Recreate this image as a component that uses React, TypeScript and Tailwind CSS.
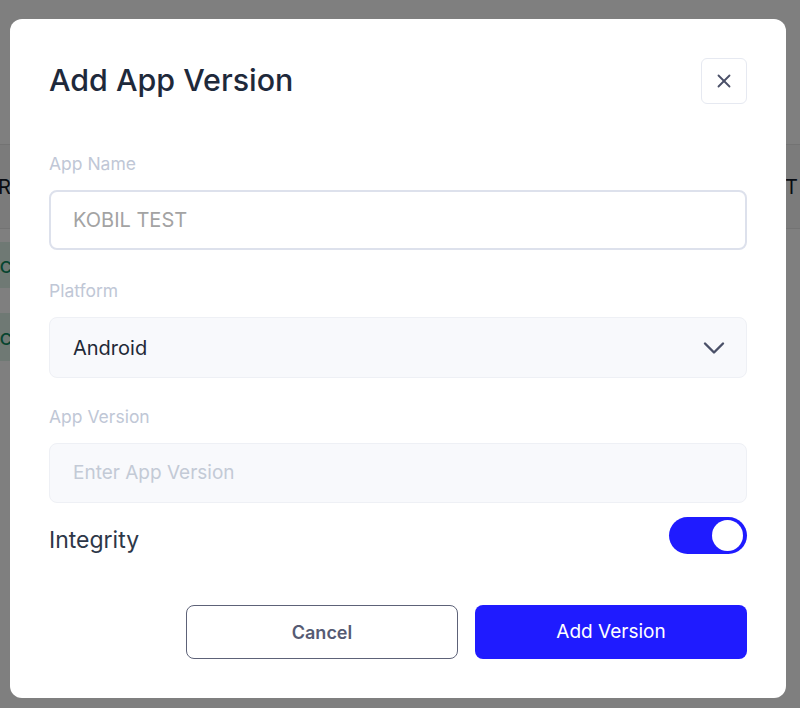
import { X, ChevronDown } from 'lucide-react';

export default function App() {
    return (
        <div className="relative w-[800px] h-[708px] overflow-hidden bg-white font-['Inter',sans-serif]">

            {/* Page behind the dialog */}
            <div className="pt-[144px]">
                <div className="h-[85px] bg-[#f6f6f6] border-y border-[#e6e6e6] flex items-center justify-between text-[20px] text-[#111827]">
                    <span className="-ml-[2px]">RI</span>
                    <span className="mr-[2px]">T</span>
                </div>
                <div className="h-[72px] flex items-center">
                    <span className="h-[46px] w-[60px] -ml-[40px] bg-[#def3e8] text-[#0f8a5f] text-[22px] flex items-center justify-end pr-[8px]">ic</span>
                </div>
                <div className="h-[72px] flex items-center">
                    <span className="h-[48px] w-[60px] -ml-[40px] bg-[#def3e8] text-[#0f8a5f] text-[22px] flex items-center justify-end pr-[8px]">ic</span>
                </div>
            </div>

            {/* Overlay */}
            <div className="absolute inset-0 bg-black/50" />

            {/* Dialog */}
            <div className="absolute left-[10px] top-[19px] w-[776px] h-[679px] bg-white rounded-[12px] p-[39px] flex flex-col">
                <div className="flex items-center justify-between h-[46px]">
                    <h2 className="text-[30.4px] font-medium text-[#1e293b]">Add App Version</h2>
                    <button className="w-[46px] h-[46px] rounded-[6px] border border-[#e6e9f1] flex items-center justify-center text-[#4a5068]">
                        <X className="w-[22px] h-[22px]" strokeWidth={2} />
                    </button>
                </div>

                <label className="mt-[48px] mb-[14px] text-[17.5px] leading-[24px] text-[#c0c7d6]">App Name</label>
                <div className="h-[60px] rounded-[8px] border-2 border-[#dde1ec] flex items-center px-[22px] text-[20px] text-[#a3a3a3]">
                    KOBIL TEST
                </div>

                <label className="mt-[29px] mb-[14px] text-[17.5px] leading-[24px] text-[#c0c7d6]">Platform</label>
                <div className="h-[61px] rounded-[8px] border border-[#eef0f5] bg-[#f8f9fc] flex items-center justify-between pl-[23px] pr-[14px] text-[20px] text-[#1f2937]">
                    Android
                    <ChevronDown className="w-[36px] h-[36px] text-[#4a5068]" strokeWidth={1.6} />
                </div>

                <label className="mt-[27px] mb-[14px] text-[17.5px] leading-[24px] text-[#c0c7d6]">App Version</label>
                <div className="h-[60px] rounded-[8px] border border-[#eef0f5] bg-[#f8f9fc] flex items-center px-[23px] text-[19px] text-[#c3cad6]">
                    Enter App Version
                </div>

                <div className="mt-[14px] flex items-center justify-between h-[37px]">
                    <span className="pt-[10px] text-[23px] text-[#2d3748]">Integrity</span>
                    <div className="w-[78px] h-[37px] rounded-full bg-[#1f1bff] flex items-center justify-end pr-[4px]">
                        <div className="w-[31px] h-[31px] rounded-full bg-white" />
                    </div>
                </div>

                <div className="mt-[51px] flex justify-end gap-[17px]">
                    <button className="w-[272px] h-[54px] rounded-[8px] border-[1.5px] border-[#5d6278] text-[18px] font-semibold text-[#565b73]">
                        Cancel
                    </button>
                    <button className="w-[272px] h-[54px] rounded-[8px] bg-[#1f1bff] text-[19px] text-white">
                        Add Version
                    </button>
                </div>
            </div>
        </div>
    );
}
